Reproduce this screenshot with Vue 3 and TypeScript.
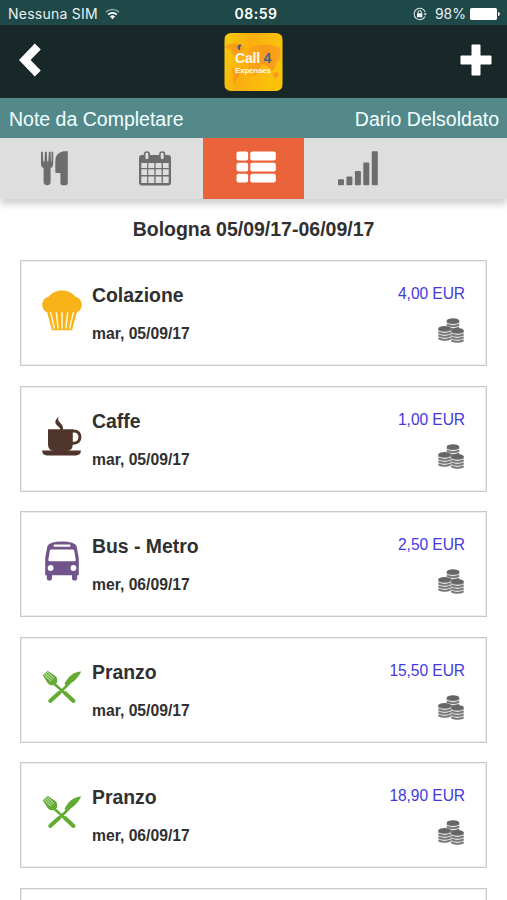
<script setup lang="ts">
type Category = 'muffin' | 'cup' | 'bus' | 'meal'

interface Expense {
  id: number
  category: Category
  title: string
  date: string
  amount: string
}

const expenses: Expense[] = [
  { id: 1, category: 'muffin', title: 'Colazione', date: 'mar, 05/09/17', amount: '4,00 EUR' },
  { id: 2, category: 'cup', title: 'Caffe', date: 'mar, 05/09/17', amount: '1,00 EUR' },
  { id: 3, category: 'bus', title: 'Bus - Metro', date: 'mer, 06/09/17', amount: '2,50 EUR' },
  { id: 4, category: 'meal', title: 'Pranzo', date: 'mar, 05/09/17', amount: '15,50 EUR' },
  { id: 5, category: 'meal', title: 'Pranzo', date: 'mer, 06/09/17', amount: '18,90 EUR' },
]

const coinStacks = [
  { x: 8.6, y: 0.2, coins: 3 },
  { x: 0.2, y: 8, coins: 4 },
  { x: 13, y: 10, coins: 4 },
]
</script>

<template>
  <div class="screen">
    <div class="status">
      <div class="carrier">
        <span class="carrier-name">Nessuna SIM</span>
        <svg class="wifi" viewBox="0 0 15 12">
          <path d="M1 4.2a9.2 9.2 0 0 1 13 0" fill="none" stroke="#8aa5a5" stroke-width="1.7" />
          <path d="M3.2 6.7a6.1 6.1 0 0 1 8.6 0" fill="none" stroke="#fff" stroke-width="1.7" />
          <path d="M7.5 11.3 4.9 8.6a3.7 3.7 0 0 1 5.2 0z" fill="#fff" />
        </svg>
      </div>
      <span class="clock">08:59</span>
      <div class="power">
        <svg class="lock" viewBox="0 0 14 14">
          <path d="M12.2 5A5.7 5.7 0 1 0 12 9.4" fill="none" stroke="#d5e2e2" stroke-width="1.1" />
          <path d="m10.6 6.2 3.2 0-1.6 2.6z" fill="#d5e2e2" />
          <rect x="4" y="6.3" width="5.4" height="4" rx=".5" fill="#fff" />
          <path d="M5.1 6.5V5.2a1.6 1.6 0 0 1 3.2 0v1.3" fill="none" stroke="#fff" stroke-width="1" />
        </svg>
        <span class="percent">98%</span>
        <svg class="battery" viewBox="0 0 30 12">
          <rect x="0" y="0" width="27" height="12" rx="1.6" fill="#fff" />
          <path d="M28 4c1.2 0 1.8.8 1.8 2s-.6 2-1.8 2z" fill="#fff" />
        </svg>
      </div>
    </div>

    <header class="topbar">
      <svg class="back" viewBox="0 0 24 36">
        <path d="M18.8 4.500 5.700 18l13.100 13.500" fill="none" stroke="#fff" stroke-width="8.300" />
      </svg>
      <div class="logo">
        <svg class="logo-map" viewBox="0 0 60 60">
          <defs>
            <linearGradient id="gold" x1="0" x2="1" y1="0" y2=".25">
              <stop offset="0" stop-color="#f8cd08" />
              <stop offset=".45" stop-color="#fbae10" />
              <stop offset="1" stop-color="#fac30a" />
            </linearGradient>
            <linearGradient id="land" x1="0" x2="1" y1="0" y2="0">
              <stop offset="0" stop-color="#f9a914" />
              <stop offset=".6" stop-color="#f7981a" />
              <stop offset="1" stop-color="#f8a818" />
            </linearGradient>
          </defs>
          <rect width="60" height="60" fill="url(#gold)" />
          <g fill="url(#land)">
            <path d="M1 13c5-3 11-2 17-1l3 4-4 5-3 6-5-4-3-6-5-1z" />
            <path d="M8 36l7 2 2 4-4 5-3 7-2-5 1-6-2-3z" />
            <path d="M24 17l8-4 12-1 14 3v12l-4 3-2 7-4 2-4-5-5-2-3 5-4 8-5-6-3-5-2-8z" />
            <path d="M49 42l6-2 2 4-5 3z" />
          </g>
          <path d="M17 12.500c-3-1-4 3-1.400 5-.6-2 .1-3.700 1.400-5z" fill="#35527c" stroke="#35527c" />
        </svg>
        <div class="logo-text">
          <div class="logo-call">Call <span class="logo-four">4</span></div>
          <div class="logo-sub">Expenses</div>
        </div>
      </div>
      <svg class="plus" viewBox="0 0 32 32">
        <path d="M11.500 1.500q0-1 1-1h7q1 0 1 1v10.100h10q1 0 1 1v6.800q0 1-1 1h-10v10.100q0 1-1 1h-7q-1 0-1-1V20.400h-10q-1 0-1-1v-6.800q0-1 1-1h10z" fill="#fff" />
      </svg>
    </header>

    <div class="subbar">
      <span>Note da Completare</span>
      <span class="user">Dario Delsoldato</span>
    </div>

    <nav class="tabs">
      <div class="tab">
        <svg viewBox="0 0 40 36">
          <g fill="#6d6d6d">
            <path d="M7 2q.9-1.200 1.800 0l.5 9.500h1.200L10.900 2q.9-1.200 1.900 0l.4 9.500h1.100L14.800 2q.9-1.200 1.800 0l.4 9.500h.5V2q.8-1.200 1.700 0v12.500q0 2.300-2.600 3.500V32.500q-.5 2.700-3.500 2.700t-3.500-2.700V18Q7 16.800 7 14.500z" />
            <path d="M33.800 1.300V33q0 2.200-2.200 2.200h-3q-2.200 0-2.200-2.200V23h-4.200q-.9 0-.9-1V11.500q0-8.700 8.200-10.200z" />
          </g>
        </svg>
      </div>
      <div class="tab">
        <svg viewBox="0 0 40 36">
          <path fill-rule="evenodd" fill="#6d6d6d" d="M7 5h26q3 0 3 3v24.500q0 3-3 3H7q-3 0-3-3V8q0-3 3-3zM6.300 13h5.800v4.900H6.300zm7 0h6v4.900h-6zm7.300 0h6v4.900h-6zm7.300 0h5.800v4.900h-5.800zM6.300 19.200h5.800v5.800H6.300zm7 0h6v5.800h-6zm7.300 0h6v5.800h-6zm7.300 0h5.800v5.800h-5.800zM6.300 26.400h5.800v6.600H6.300zm7 0h6v6.600h-6zm7.300 0h6v6.600h-6zm7.300 0h5.800v6.600h-5.800z" />
          <rect x="9.600" y="2" width="4.600" height="8" rx="2.200" fill="#dedede" stroke="#6d6d6d" stroke-width="1.700" />
          <rect x="24.900" y="2" width="4.600" height="8" rx="2.200" fill="#dedede" stroke="#6d6d6d" stroke-width="1.700" />
        </svg>
      </div>
      <div class="tab active">
        <svg viewBox="0 0 40 36">
          <g fill="#fff">
            <template v-for="row in 3" :key="row">
              <rect x=".5" :y="row * 11.100 - 9.500" width="11.600" height="8.800" rx="2" />
              <rect x="14.300" :y="row * 11.100 - 9.500" width="25.500" height="8.800" rx="2" />
            </template>
          </g>
        </svg>
      </div>
      <div class="tab">
        <svg viewBox="0 0 40 36">
          <g fill="#6d6d6d">
            <rect x="0" y="29.300" width="6" height="6" rx="1" />
            <rect x="8.400" y="26.400" width="6" height="8.900" rx="1" />
            <rect x="16.900" y="21" width="6" height="14.300" rx="1" />
            <rect x="25.300" y="12.400" width="6" height="22.900" rx="1" />
            <rect x="33.800" y="1.300" width="6" height="34" rx="1" />
          </g>
        </svg>
      </div>
      <div class="tab"></div>
    </nav>

    <main class="content">
      <h1 class="trip">Bologna 05/09/17-06/09/17</h1>
      <div class="list">
        <article v-for="item in expenses" :key="item.id" class="card">
          <svg class="category" viewBox="0 0 40 42">
            <g v-if="item.category === 'muffin'">
              <path d="M4.500 20h31L30 40.200H10z" fill="#f7b317" />
              <path d="m8.300 21 4.200 17.700M14.200 21l1.900 17.700M20 21v17.700M25.800 21l-1.900 17.700M31.700 21l-4.200 17.700" stroke="#fff6dc" stroke-width="1.500" fill="none" />
              <path d="M5.500 22.300C-1.500 20.300-1.800 8.800 6.500 6.800 10.500 2 15.500.5 20 .5S29.500 2 33.500 6.800c8.300 2 8 13.500 1 15.500z" fill="#f7b317" />
            </g>
            <g v-else-if="item.category === 'cup'" fill="#50352c">
              <path d="M6 13.200h24.800v14.500q0 7.300-6 7.300H12q-6 0-6-7.300z" />
              <path d="M29.500 14.900h2.300c8.200 0 8.200 12.400 0 12.400h-2.300" fill="none" stroke="#50352c" stroke-width="3" />
              <path d="M0 34.500h39q-.5 4.900-5 4.900H5q-4.500 0-5-4.900z" />
              <path d="M17.200.3c-5.600 4.800-4.200 7.300-1.500 9.700 2 1.900 2.800 3 2.800 4.200h2.600c.3-4-1.400-5.700-3.200-7.700-1.800-2-2.500-3.500-.7-6.200z" />
            </g>
            <g v-else-if="item.category === 'bus'">
              <path fill="#71558a" fill-rule="evenodd" d="M5.300 5.500Q7 .4 20 .4t14.700 5.100l2.100 11.500v17.200h-1.600v2.700q0 2.700-2.600 2.700T30 36.900v-2.700H10v2.700q0 2.700-2.600 2.700t-2.600-2.700v-2.700H3.200V17zM12.500 3.600q-1 0-1 1.100t1 1.100h15q1 0 1-1.100t-1-1.100zM9.300 8.500q-1.200 0-1.500 1.200L6.300 18.800q-.3 1.400 1.200 1.400h25q1.500 0 1.200-1.400L32.200 9.700q-.3-1.200-1.500-1.200z" />
              <circle cx="8.600" cy="27" r="2.900" fill="#fff" />
              <circle cx="31.400" cy="27" r="2.900" fill="#fff" />
            </g>
            <g v-else>
              <path d="M11.500 16 31 34" stroke="#63ab32" stroke-width="2.600" />
              <path d="m23 26 8.500 8M17 26 8.200 34" stroke="#63ab32" stroke-width="4" stroke-linecap="round" fill="none" />
              <path d="M17 26.500 25 18.500" stroke="#63ab32" stroke-width="2.600" />
              <path d="M39.200 4.400C32 4.500 26 9.500 22.500 16.800l2.500 2.700c1.800-.5 2.700-1.600 3.700-3 4.300-2.800 8.300-7.200 10.500-12.100z" fill="#63ab32" />
              <path d="M.7 8.300 5.500 15.700C7.500 18.500 10 18.600 12.500 18l2.400-2.400c.8-2.500.5-5-2.300-7L5.600 3.800z" fill="#63ab32" />
              <path d="m1.500 7.200 7.500 7M3 5.800l7.500 7M4.500 4.400l7.500 7" stroke="#eef8e8" stroke-width=".85" />
            </g>
          </svg>
          <div class="details">
            <h2 class="name">{{ item.title }}</h2>
            <p class="date">{{ item.date }}</p>
          </div>
          <div class="cost">
            <span class="amount">{{ item.amount }}</span>
            <svg class="coins" viewBox="0 0 27 26">
              <g v-for="(stack, s) in coinStacks" :key="s" :transform="`translate(${stack.x} ${stack.y})`">
                <path :d="`M0 2.500V${stack.coins * 3 + 0.300}Q6.400 ${stack.coins * 3 + 4.500} 12.800 ${stack.coins * 3 + 0.300}V2.500z`" fill="#e4e4e4" />
                <path v-for="n in stack.coins" :key="n" :d="`M.2 ${n * 3 + 0.400}q6.200 3 12.400 0`" fill="none" stroke="#777" stroke-width="1.900" />
                <ellipse cx="6.400" cy="2.600" rx="6.300" ry="2.500" fill="#666" />
              </g>
            </svg>
          </div>
        </article>
        <article class="card"></article>
      </div>
    </main>
  </div>
</template>

<style>
body {
  margin: 0;
  background: #fff;
}
</style>

<style scoped>
.screen {
  width: 507px;
  height: 900px;
  overflow: hidden;
  display: flex;
  flex-direction: column;
  background: #fff;
  font-family: "Liberation Sans", Arial, sans-serif;
  color: #303030;
}
svg {
  display: block;
  flex: none;
}
.status {
  flex: none;
  height: 25px;
  box-sizing: border-box;
  padding: 2px 7px 0 8px;
  display: grid;
  grid-template-columns: 1fr auto 1fr;
  align-items: center;
  background: #1f4848;
  color: #e8f0f0;
  font-family: Inter, Roboto, sans-serif;
  font-size: 14px;
}
.carrier,
.power {
  display: flex;
  align-items: center;
}
.carrier-name {
  letter-spacing: 0.25px;
}
.wifi {
  width: 15px;
  height: 12px;
  margin-left: 7px;
}
.clock {
  margin-left: 4px;
  font-weight: 600;
  letter-spacing: 0.5px;
  color: #fff;
}
.power {
  justify-content: flex-end;
}
.lock {
  width: 14px;
  height: 14px;
}
.percent {
  margin: 0 4px 0 8px;
}
.battery {
  width: 30px;
  height: 12px;
}
.topbar {
  flex: none;
  height: 73px;
  box-sizing: border-box;
  padding: 0 15px 3px 19px;
  display: flex;
  align-items: center;
  justify-content: space-between;
  background: #182829;
}
.back {
  width: 24px;
  height: 36px;
}
.logo {
  width: 59px;
  height: 58px;
  margin-left: 4px;
  margin-top: 3px;
  display: grid;
  border-radius: 7px;
  overflow: hidden;
}
.logo-map,
.logo-text {
  grid-area: 1 / 1;
}
.logo-map {
  width: 59px;
  height: 58px;
}
.logo-text {
  z-index: 1;
  padding: 17px 0 0 11px;
  color: #fff8e8;
  font-weight: 700;
  white-space: nowrap;
}
.logo-call {
  font-size: 14px;
  line-height: 16px;
  letter-spacing: -0.2px;
}
.logo-four {
  color: #49628c;
}
.logo-sub {
  font-size: 8px;
  line-height: 9px;
  letter-spacing: -0.2px;
}
.plus {
  width: 32px;
  height: 32px;
}
.subbar {
  position: relative;
  z-index: 1;
  flex: none;
  height: 40px;
  box-sizing: border-box;
  padding: 2px 8px 0 9px;
  display: flex;
  align-items: center;
  justify-content: space-between;
  background: #54898b;
  color: #f2ffff;
  font-size: 19.500px;
}
.tabs {
  flex: none;
  height: 61px;
  display: grid;
  grid-template-columns: repeat(5, 1fr);
  background: #dedede;
  box-shadow: 0 5px 7px 0 #cfcfcf;
}
.tab {
  padding: 12px 0 0 6px;
  display: flex;
  justify-content: center;
  align-items: flex-start;
}
.tab svg {
  width: 40px;
  height: 36px;
}
.active {
  background: #ea633b;
}
.content {
  flex: 1;
  min-height: 0;
  padding: 18px 20px 0;
}
.trip {
  margin: 0 0 18px;
  height: 25px;
  text-align: center;
  font-size: 19.500px;
  line-height: 24px;
  font-weight: 700;
}
.list {
  display: grid;
  gap: 19.600px;
}
.card {
  height: 106px;
  box-sizing: border-box;
  padding: 0 21px;
  border: 1px solid #cacaca;
  box-shadow: inset 0 0 0 1px #ededed;
  display: flex;
}
.category {
  width: 40px;
  height: 42px;
  margin-top: 29px;
}
.details {
  flex: 1;
  padding: 22px 0 0 10px;
}
.name {
  margin: 0;
  font-size: 19.400px;
  line-height: 24px;
}
.date {
  margin: 16px 0 0;
  font-size: 15.700px;
  line-height: 22px;
  font-weight: 700;
}
.cost {
  display: flex;
  flex-direction: column;
  align-items: flex-end;
  padding-top: 22px;
}
.amount {
  font-size: 15.600px;
  line-height: 22px;
  letter-spacing: -0.08px;
  color: #4439e0;
}
.coins {
  width: 27px;
  height: 26px;
  margin-top: 13px;
}
</style>
